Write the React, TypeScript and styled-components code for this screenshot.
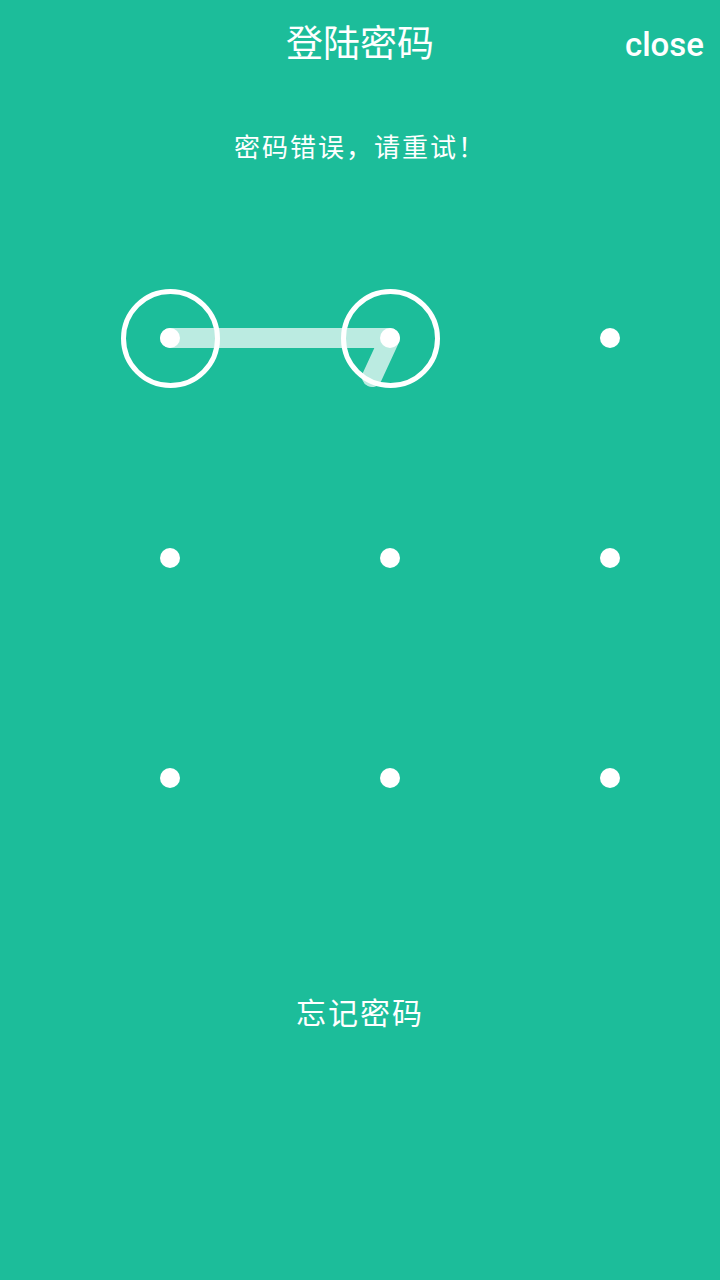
import React from "react";
import styled, { createGlobalStyle } from "styled-components";

const GlobalStyle = createGlobalStyle`
  html, body {
    margin: 0;
    padding: 0;
    background: #1cbd9a;
  }
  * { box-sizing: border-box; }
`;

const Screen = styled.div`
  width: 720px;
  min-height: 1280px;
  background: #1cbd9a;
  color: #ffffff;
  font-family: "Noto Sans CJK SC", "Noto Sans", sans-serif;
  display: flex;
  flex-direction: column;
  align-items: center;
`;

const Header = styled.header`
  width: 100%;
  height: 82px;
  display: grid;
  grid-template-columns: 1fr auto 1fr;
  align-items: center;
`;

const Title = styled.h1`
  grid-column: 2;
  margin: 0;
  font-size: 37px;
  font-weight: 400;
  line-height: 52px;
`;

const Close = styled.button`
  grid-column: 3;
  justify-self: end;
  margin: 0 16px 0 0;
  padding: 7px 0 0;
  border: none;
  background: none;
  color: #ffffff;
  font-family: Roboto, "Noto Sans", sans-serif;
  font-size: 33px;
  font-weight: 500;
  line-height: normal;
  cursor: pointer;
`;

const Message = styled.p`
  margin: 46px 0 0;
  font-size: 26px;
  line-height: 36px;
  letter-spacing: 2px;
  text-align: center;
`;

const Pad = styled.div`
  position: relative;
  align-self: flex-start;
  margin: 64px 0 0 60px;
  display: grid;
  grid-template-columns: repeat(3, 220px);
  grid-auto-rows: 220px;
`;

const Cell = styled.div`
  display: flex;
  align-items: center;
  justify-content: center;
`;

const Ring = styled.div<{ $active: boolean }>`
  width: 99px;
  height: 99px;
  border-radius: 50%;
  border: 5px solid ${(p) => (p.$active ? "#ffffff" : "transparent")};
  display: flex;
  align-items: center;
  justify-content: center;
`;

const Dot = styled.span`
  width: 20px;
  height: 20px;
  border-radius: 50%;
  background: #ffffff;
`;

const Trail = styled.svg`
  position: absolute;
  inset: 0;
  pointer-events: none;
`;

const Forgot = styled.button`
  margin: 103px 0 0;
  padding: 0;
  border: none;
  background: none;
  color: #ffffff;
  font-family: "Noto Sans CJK SC", "Noto Sans", sans-serif;
  font-size: 30px;
  line-height: 40px;
  letter-spacing: 2px;
  cursor: pointer;
`;

const selected = [0, 1];
const trailPoints = "110,110 330,110 312,149";

export default function App() {
  return (
    <>
      <GlobalStyle />
      <Screen>
        <Header>
          <Title>登陆密码</Title>
          <Close>close</Close>
        </Header>
        <Message>密码错误，请重试！</Message>
        <Pad>
          {Array.from({ length: 9 }).map((_, i) => (
            <Cell key={i}>
              <Ring $active={selected.includes(i)}>
                <Dot />
              </Ring>
            </Cell>
          ))}
          <Trail width="660" height="660" viewBox="0 0 660 660">
            <polyline
              points={trailPoints}
              fill="none"
              stroke="rgba(255,255,255,0.7)"
              strokeWidth="20"
              strokeLinecap="round"
              strokeLinejoin="round"
            />
          </Trail>
        </Pad>
        <Forgot>忘记密码</Forgot>
      </Screen>
    </>
  );
}
